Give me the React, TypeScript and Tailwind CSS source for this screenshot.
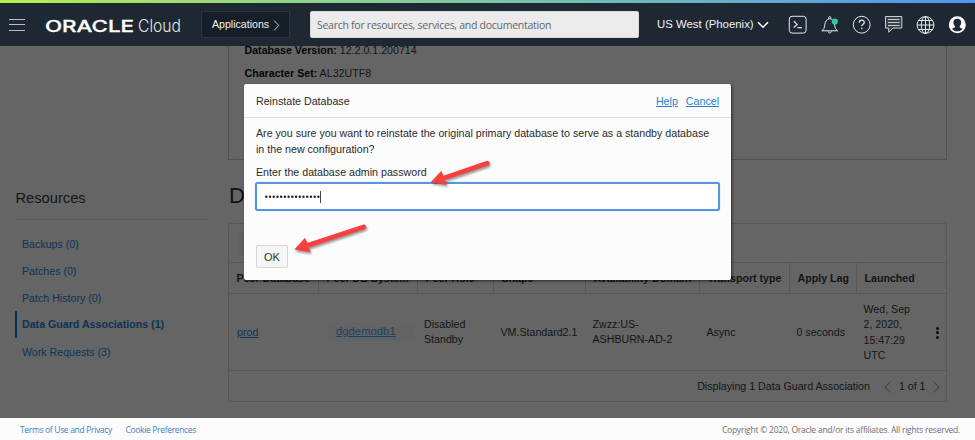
import React from "react";

const resources = [
  { label: "Backups (0)" },
  { label: "Patches (0)" },
  { label: "Patch History (0)" },
  { label: "Data Guard Associations (1)", active: true },
  { label: "Work Requests (3)" },
];

const columns = [
  "Peer Database",
  "Peer DB System",
  "Peer Role",
  "Shape",
  "Availability Domain",
  "Transport type",
  "Apply Lag",
  "Launched",
];

const grid = "grid grid-cols-[90px_99px_76px_92px_114px_90px_67px_89px]";

function Logo() {
  return (
    <svg className="ml-[20px] shrink-0 overflow-visible" width="140" height="28" viewBox="0 0 140 28">
      <text x="0" y="20.500" fontFamily="Inter, sans-serif" fontWeight="500" fontSize="15.800" fill="#fff" stroke="#fff" strokeWidth="0.300" textLength="89" lengthAdjust="spacingAndGlyphs">
        ORACLE
      </text>
      <text x="93" y="20.500" fontFamily="Inter, sans-serif" fontWeight="300" fontSize="16.600" fill="#e4e6e8" textLength="43" lengthAdjust="spacingAndGlyphs">
        Cloud
      </text>
    </svg>
  );
}

function HeaderIcons() {
  const p = { width: 20, height: 20, viewBox: "0 0 20 20", fill: "none", stroke: "#e4e7e9", strokeWidth: 1 };
  return (
    <div className="flex items-center gap-3">
      <svg {...p}>
        <rect x="1.300" y="1.300" width="16.800" height="16.800" rx="2.800" />
        <path d="M5.800 6.300l3.400 3.100-3.400 3.100M9.500 12.700h4.400" strokeWidth="1.200" />
      </svg>
      <svg {...p}>
        <path d="M1.800 15.800c2-1.300 2.500-3 2.900-5.400C5.200 6.200 6.700 4 9.700 3.700c3 .3 4.500 2.500 5 6.700.400 2.400.9 4.100 2.900 5.400zM8.700 3.700V2.300c0-.9 2-.9 2 0v1.400M8 16.200c.2 2.300 3.200 2.300 3.400 0" />
        <circle cx="14.800" cy="6.600" r="3.100" fill="#2fc8a0" stroke="none" />
      </svg>
      <svg {...p}>
        <circle cx="9.700" cy="9.700" r="8.400" />
        <path d="M7.300 7.800c0-3.600 5-3.300 5-.5 0 1.900-2.500 1.900-2.500 4M9.800 12.700v1.500" strokeWidth="1.300" />
      </svg>
      <svg {...p}>
        <path d="M1.500 1.500h16.300v11.600H9l-4.300 4.200v-4.200H1.500z" fill="#39424b" stroke="#c9cdd0" />
        <path d="M4 4.500h11.500M4 7.500h11.500M4 10.500h11.500" stroke="#c9cdd0" />
      </svg>
      <svg {...p}>
        <circle cx="9.500" cy="10" r="8.400" />
        <ellipse cx="9.500" cy="10" rx="4.200" ry="8.400" />
        <path d="M9.500 1.600v16.800M1.100 10h16.800M2.800 5.500h13.400M2.800 14.500h13.400" />
      </svg>
      <svg {...p}>
        <circle cx="9.300" cy="9.700" r="8.500" fill="#fff" stroke="none" />
        <path d="M9.300 3.700c2.600 0 4 1.700 3.900 3.900-.1 2-.8 3-1.700 3.900.2 1.100 1.100 1.500 3.200 2.200-2.300 3.400-8.500 3.400-10.800 0 2.100-.7 3-1.100 3.200-2.200-.9-.9-1.600-1.900-1.700-3.900-.1-2.200 1.300-3.900 3.900-3.900z" fill="#1e2832" stroke="none" />
      </svg>
    </div>
  );
}

function Header() {
  return (
    <header className="h-[46px] shrink-0 bg-[#1e2833]">
      <div className="h-[3px] bg-[linear-gradient(90deg,#b6ee4b_0%,#8fd38e_32%,#6db9bb_66%,#4f95f5_100%)]" />
      <div className="flex h-[43px] items-center">
        <div className="ml-[9px] flex w-4 flex-col gap-[4.500px]">
          <div className="h-px bg-[#b9bec2]" />
          <div className="h-px bg-[#b9bec2]" />
          <div className="h-px bg-[#b9bec2]" />
        </div>
        <Logo />
        <div className="ml-[16px] flex h-[27px] w-[89px] shrink-0 items-center border border-[#2b353e] bg-[#161e27] pl-[10px] text-[10.6px] text-[#f3f3f3]">
          Applications
          <svg className="ml-1 mt-px" width="7" height="11" viewBox="0 0 7 11" fill="none" stroke="#c4c8cb">
            <path d="M1 .5l4.800 5-4.800 5" />
          </svg>
        </div>
        <div className="ml-5 h-[27px] w-[329px] shrink-0 rounded-[2px] border border-[#d5d7d9] bg-[#ebebeb] pl-[6px] font-['Open_Sans',sans-serif] text-[10.5px] leading-[27px] tracking-[-0.27px] text-[#62676b]">
          Search for resources, services, and documentation
        </div>
        <div className="ml-[18px] flex w-[131px] shrink-0 items-center pt-px text-[11.4px] whitespace-nowrap text-[#f1f2f3]">
          US West (Phoenix)
          <svg className="ml-[3px]" width="12" height="8" viewBox="0 0 12 8" fill="none" stroke="#fff" strokeWidth="1.600">
            <path d="M1 1.200l5 5 5-5" />
          </svg>
        </div>
        <HeaderIcons />
      </div>
    </header>
  );
}

function Sidebar() {
  return (
    <aside className="ml-[15px] w-[193px] shrink-0 pt-[142px]">
      <h2 className="h-[32px] border-b border-[#555] pl-[0.500px] text-[14.7px] leading-[20px] text-[#151515]">Resources</h2>
      <nav className="pt-[10px] text-[10.65px] text-[#0d3354]">
        {resources.map((r) => (
          <div
            key={r.label}
            className={
              r.active
                ? "h-[27px] border-l-2 border-[#0d3354] pl-[5px] leading-[27px] font-bold"
                : "h-[27px] pl-[7px] leading-[28px]"
            }
          >
            {r.label}
          </div>
        ))}
      </nav>
    </aside>
  );
}

function Associations() {
  return (
    <div className="mt-[13px] h-[179px] w-[719px] rounded-[2px] border border-[#575757] text-[10.65px] leading-[15.300px] text-[#141414]">
      <div className="h-[39px] border-b border-[#575757] px-2 py-[8px]">
        <div className="h-[23px] w-24 rounded-[2px] bg-[#606060]" />
      </div>
      <div className={grid + " h-[31px] border-b border-[#575757] font-bold"}>
        {columns.map((c) => (
          <div key={c} className="border-r border-[#575757] pl-[7.500px] leading-[30px] whitespace-nowrap last:border-r-0">
            {c}
          </div>
        ))}
      </div>
      <div className={grid + " h-[77px] items-center border-b border-[#575757]"}>
        <div className="pt-px pl-[8px] text-[#0d3354] underline">prod</div>
        <div className="ml-2 flex h-[18px] w-[87px] items-center bg-[#636363] pl-[9px] text-[11.300px] text-[#1b4263] underline">
          dgdemodb1
        </div>
        <div className="pl-[6px]">Disabled<br />Standby</div>
        <div className="pt-px pl-[6.500px]">VM.Standard2.1</div>
        <div className="pl-[6.500px]">Zwzz:US-<br />ASHBURN-AD-2</div>
        <div className="pt-px pl-[6.500px]">Async</div>
        <div className="pt-px pl-[6.500px]">0 seconds</div>
        <div className="flex items-center justify-between pt-px pr-[7px] pl-[6.500px]">
          <div>Wed, Sep<br />2, 2020,<br />15:47:29<br />UTC</div>
          <div className="flex flex-col gap-[1.500px]">
            <div className="size-[3px] rounded-full bg-[#0c0c0c]" />
            <div className="size-[3px] rounded-full bg-[#0c0c0c]" />
            <div className="size-[3px] rounded-full bg-[#0c0c0c]" />
          </div>
        </div>
      </div>
      <div className="flex h-[31px] items-center justify-end pr-[6px]">
        <span>Displaying 1 Data Guard Association</span>
        <svg className="mr-[7px] ml-[14px] mt-px" width="8" height="12" viewBox="0 0 8 12" fill="none" stroke="#3c3c3c">
          <path d="M7 .5L1 6l6 5.500" />
        </svg>
        <span>1 of 1</span>
        <svg className="ml-[6.500px] mt-px" width="8" height="12" viewBox="0 0 8 12" fill="none" stroke="#3c3c3c">
          <path d="M1 .5L7 6l-6 5.500" />
        </svg>
      </div>
    </div>
  );
}

function Dialog() {
  return (
    <div role="dialog" className="absolute top-[84px] left-[244px] h-[196px] w-[487px] rounded-[2px] bg-[#fcfcfc] text-[10.66px] text-[#2b2b2b] shadow-[1px_1px_3px_rgba(0,0,0,0.600)]">
      <div className="flex h-[34px] items-center border-b border-[#dadedf] px-3 pt-[2px]">
        <span className="grow">Reinstate Database</span>
        <span className="mr-2 text-[#1f7fd0] underline">Help</span>
        <span className="text-[#1f7fd0] underline">Cancel</span>
      </div>
      <div className="px-[11px] pt-[7px]">
        <p className="pl-px leading-[16px] whitespace-nowrap">
          Are you sure you want to reinstate the original primary database to serve as a standby database
          <br />
          in the new configuration?
        </p>
        <p className="mt-[7px] pl-px leading-[16px]">Enter the database admin password</p>
        <div className="mt-[2px] flex h-[29px] items-center rounded-[3px] border-2 border-[#5596dc] bg-white pl-[8px] shadow-[0_0_1px_#5596dc]">
          <svg width="55" height="4" viewBox="0 0 55 4" fill="#222">
            {Array.from({ length: 15 }, (_, i) => (
              <circle key={i} cx={1.3 + i * 3.72} cy="1.800" r="1.200" />
            ))}
          </svg>
          <span className="h-[12px] w-px bg-[#444]" />
        </div>
        <button className="mt-[34px] ml-px h-[23px] w-[32px] rounded-[2px] border border-[#d2d7da] bg-[#f5f5f5] pt-px text-[11px] text-[#333]">
          OK
        </button>
      </div>
    </div>
  );
}

function Arrows() {
  return (
    <svg className="absolute top-[155px] left-[285px] drop-shadow-[1px_2px_1px_rgba(0,0,0,0.400)]" width="215" height="110" viewBox="285 155 215 110" fill="#f8403f">
      <path d="M430.700 182.300L441.300 170.700L443.300 175.700L486.300 160.900A2.400 2.400 0 0 1 488 165.400L445 180L447 184.900Z" />
      <path d="M294.300 249.500L305 237.800L307.200 242.900L363.500 224.500A2.400 2.400 0 0 1 365 229L308.800 247.500L310.700 252.300Z" />
    </svg>
  );
}

export default function App() {
  return (
    <div className="relative flex h-[440px] w-[975px] flex-col overflow-hidden bg-[#656565] font-['Liberation_Sans',Arial,sans-serif]">
      <Header />
      <main className="flex h-[372px] shrink-0">
        <Sidebar />
        <section className="ml-[20px]">
          <div className="h-[114px] w-[719px] border border-t-0 border-[#525252] pl-[15.500px] text-[10.65px] text-[#141414]">
            <p className="leading-[9px]"><b className="text-[#050505]">Database Version:</b> 12.2.0.1.200714</p>
            <p className="mt-[9px] leading-[18px]"><b className="text-[#050505]">Character Set:</b> AL32UTF8</p>
          </div>
          <h1 className="mt-[22px] pl-px text-[22px] leading-[28px] text-[#101010]">Data Guard Associations</h1>
          <Associations />
        </section>
      </main>
      <footer className="flex grow items-center bg-[#fcfcfc] pt-[3px] pr-[15px] pl-5 font-['Open_Sans',sans-serif] text-[8.500px] tracking-[-0.330px]">
        <span className="text-[#3b81c3]">Terms of Use and Privacy</span>
        <span className="ml-[13.500px] text-[#3b81c3]">Cookie Preferences</span>
        <span className="ml-auto tracking-[-0.230px] text-[#707070]">Copyright © 2020, Oracle and/or its affiliates. All rights reserved.</span>
      </footer>
      <Dialog />
      <Arrows />
    </div>
  );
}
